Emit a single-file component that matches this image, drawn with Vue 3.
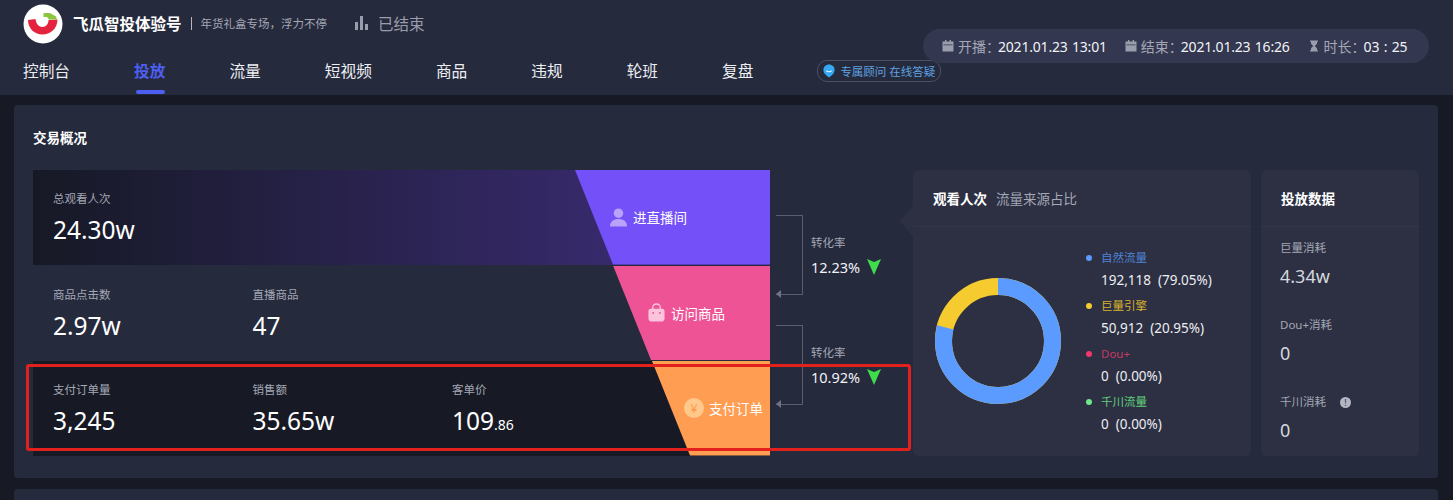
<template>
  <div class="page">
    <header class="top">
      <div class="brand-row">
        <svg class="logo" viewBox="0 0 40 40">
          <circle cx="20" cy="20" r="19.500" fill="#fff" />
          <path d="M5 16L12.500 15C13 20 16 23 19.500 23C23 23 25.500 20 25.500 16L34.500 15.500C34.500 25 27 30.500 19.500 30.500C12 30.500 5 25 5 16Z" fill="#e4243f" />
          <path d="M20.500 9H27L33 12.500L34 15.500L26 15.500L24 13H20.500Z" fill="#8cc63f" />
        </svg>
        <b class="brand-name">飞瓜智投体验号</b>
        <i class="brand-sep"></i>
        <span class="brand-desc">年货礼盒专场，浮力不停</span>
        <svg class="bars" viewBox="0 0 14 14">
          <rect x="0" y="6" width="3" height="8" />
          <rect x="5" y="0" width="3" height="14" />
          <rect x="10" y="8" width="3" height="6" />
        </svg>
        <span class="status">已结束</span>
      </div>
      <div class="time-pill">
        <span class="time-item" v-for="t in times" :key="t.label">
          <svg v-if="t.icon === 'cal'" class="time-icon" viewBox="0 0 12 12">
            <path d="M3 0h1.400v1.500h3.200V0H9v1.500h2.500V11.500H0.500V1.500H3zM1.500 4.400v0.800h9v-0.800z" />
          </svg>
          <svg v-else class="time-icon" viewBox="0 0 12 12">
            <path d="M2 0.500h8v1.200H9v2L6.800 6 9 8.300v2h1v1.200H2v-1.200h1v-2L5.200 6 3 3.700v-2H2z" />
          </svg>
          <span class="time-label">{{ t.label }}：</span><span class="time-val">{{ t.value }}</span>
        </span>
      </div>
      <nav class="nav">
        <a v-for="n in navs" :key="n" class="nav-item" :class="{ active: n === '投放' }">{{ n }}</a>
        <span class="advisor">
          <svg class="advisor-icon" viewBox="0 0 14 16">
            <path d="M7 0.500C3.300 0.500 0.500 3.200 0.500 6.800C0.500 10.800 4 13.500 7 15.500C10 13.500 13.500 10.800 13.500 6.800C13.500 3.200 10.700 0.500 7 0.500Z" fill="#37a8f5" />
            <path d="M4 7.500C4.800 9.500 9.200 9.500 10 7.500" fill="none" stroke="#fff" stroke-width="1.200" />
          </svg>
          专属顾问 在线答疑
        </span>
      </nav>
    </header>

    <section class="card">
      <h3 class="card-title">交易概况</h3>
      <div class="card-body">
        <div class="funnel">
          <div v-for="row in funnel" :key="row.name" class="f-row" :class="row.cls">
            <div class="stats">
              <div v-for="s in row.stats" :key="s.label" class="stat">
                <p class="stat-label">{{ s.label }}</p>
                <p class="stat-val">{{ s.value }}<small v-if="s.small">{{ s.small }}</small></p>
              </div>
            </div>
            <div class="piece">
              <svg v-if="row.cls === 'r1'" class="piece-icon" viewBox="0 0 20 20">
                <circle cx="10" cy="5.500" r="5" fill="#b9a2fb" />
                <path d="M1 19.500C1 14 5 11.500 10 11.500C15 11.500 19 14 19 19.500Z" fill="#b9a2fb" />
              </svg>
              <svg v-else-if="row.cls === 'r2'" class="piece-icon" viewBox="0 0 20 20">
                <path d="M6 7V5a4 4 0 0 1 8 0v2" fill="none" stroke="#fcc3dc" stroke-width="1.500" />
                <path d="M4 6h12c2 0 2.500 1.500 2.500 3v7c0 2.500-1.500 3.500-3.500 3.500H5C3 19.500 1.500 18.500 1.500 16V9C1.500 7.500 2 6 4 6Z" fill="#fcc3dc" />
                <circle cx="6.500" cy="10.500" r="1" fill="#ee5396" />
                <circle cx="13.500" cy="10.500" r="1" fill="#ee5396" />
              </svg>
              <span v-else class="yen">¥</span>
              <span>{{ row.name }}</span>
            </div>
          </div>
        </div>

        <div class="convs">
          <div v-for="c in convs" :key="c" class="conv">
            <div class="bracket"></div>
            <div class="conv-text">
              <p class="conv-label">转化率</p>
              <p class="conv-val">{{ c }}
                <svg class="down" viewBox="0 0 14 16"><path d="M0 0L7 3L14 0L7 16Z" fill="#3fdc4c" /></svg>
              </p>
            </div>
          </div>
        </div>

        <div class="panel source">
          <div class="panel-head"><b>观看人次</b><span>流量来源占比</span></div>
          <div class="source-body">
            <svg class="donut" viewBox="0 0 126 126">
              <circle cx="63" cy="63" r="54.500" fill="none" stroke="#f5cb30" stroke-width="17" />
              <circle cx="63" cy="63" r="54.500" fill="none" stroke="#5b9bff" stroke-width="17" pathLength="100" stroke-dasharray="79.050 100" transform="rotate(-90 63 63)" />
            </svg>
            <ul class="legend">
              <li v-for="l in legend" :key="l.name">
                <p class="legend-name" :style="{ color: l.text }"><i :style="{ background: l.dot }"></i>{{ l.name }}</p>
                <p class="legend-val">{{ l.value }}</p>
              </li>
            </ul>
          </div>
        </div>

        <div class="panel spend">
          <div class="panel-head"><b>投放数据</b></div>
          <div class="spend-body">
            <div v-for="s in spend" :key="s.label" class="spend-item">
              <p class="spend-label">{{ s.label }}<i v-if="s.tip" class="tip">!</i></p>
              <p class="spend-val">{{ s.value }}</p>
            </div>
          </div>
        </div>
      </div>
      <div class="mark"></div>
    </section>
    <section class="card-next"></section>
  </div>
</template>

<script setup>
const navs = ['控制台', '投放', '流量', '短视频', '商品', '违规', '轮班', '复盘']

const times = [
  { icon: 'cal', label: '开播', value: '2021.01.23 13:01' },
  { icon: 'cal', label: '结束', value: '2021.01.23 16:26' },
  { icon: 'glass', label: '时长', value: '03 : 25' }
]

const funnel = [
  { cls: 'r1', name: '进直播间', stats: [{ label: '总观看人次', value: '24.30w' }] },
  {
    cls: 'r2',
    name: '访问商品',
    stats: [
      { label: '商品点击数', value: '2.97w' },
      { label: '直播商品', value: '47' }
    ]
  },
  {
    cls: 'r3',
    name: '支付订单',
    stats: [
      { label: '支付订单量', value: '3,245' },
      { label: '销售额', value: '35.65w' },
      { label: '客单价', value: '109', small: '.86' }
    ]
  }
]

const convs = ['12.23%', '10.92%']

const legend = [
  { name: '自然流量', value: '192,118  (79.05%)', dot: '#5b9bff', text: '#4f83d6' },
  { name: '巨量引擎', value: '50,912  (20.95%)', dot: '#f5cb30', text: '#d9b32e' },
  { name: 'Dou+', value: '0  (0.00%)', dot: '#f0386b', text: '#c23a66' },
  { name: '千川流量', value: '0  (0.00%)', dot: '#6fe88a', text: '#62d07c' }
]

const spend = [
  { label: '巨量消耗', value: '4.34w' },
  { label: 'Dou+消耗', value: '0' },
  { label: '千川消耗', value: '0', tip: true }
]
</script>

<style>
body {
  background: #171a25;
}
</style>

<style scoped>
.page {
  width: 1453px;
  height: 500px;
  overflow: hidden;
  background: #171a25;
  font-family: "Noto Sans", "Noto Sans CJK SC", sans-serif;
  color: #fff;
}

p,
h3,
ul {
  margin: 0;
  padding: 0;
}

.top {
  position: relative;
  height: 95px;
  background: #262a3d;
}

.brand-row {
  display: flex;
  align-items: center;
  height: 46px;
  padding-left: 23px;
}

.logo {
  width: 40px;
  height: 40px;
  margin-top: 1px;
}

.brand-name {
  margin-left: 10px;
  font-size: 15.500px;
  font-weight: 700;
}

.brand-sep {
  width: 1px;
  height: 13px;
  margin: 0 9px 0 9px;
  background: #b5b8c4;
}

.brand-desc {
  font-size: 11.500px;
  color: #a4a7b4;
}

.bars {
  width: 14px;
  height: 14px;
  margin-left: 28px;
  fill: #9a9dab;
}

.status {
  margin-left: 9px;
  font-size: 15.500px;
  color: #9a9dab;
}

.time-pill {
  position: absolute;
  top: 29px;
  left: 923px;
  display: flex;
  align-items: center;
  gap: 18px;
  width: 506px;
  height: 34px;
  box-sizing: border-box;
  padding-left: 19px;
  border-radius: 17px;
  background: #333750;
  font-size: 14px;
  white-space: nowrap;
}

.time-item {
  display: flex;
  align-items: center;
}

.time-icon {
  width: 12px;
  height: 12px;
  margin-right: 4px;
  fill: #9a9dab;
}

.time-label {
  color: #a4a7b4;
}

.time-val {
  margin-left: -2px;
  letter-spacing: -0.200px;
  word-spacing: 1px;
  color: #f2f3f6;
}

.nav {
  display: flex;
  align-items: center;
  gap: 64px;
  padding-left: 23px;
}

.nav-item {
  position: relative;
  display: block;
  height: 49px;
  line-height: 50px;
  font-size: 15.700px;
  color: #eceef2;
}

.nav-item.active {
  color: #4d5ff0;
  font-weight: 700;
}

.nav-item.active::after {
  content: "";
  position: absolute;
  left: 2px;
  bottom: 1px;
  width: 29px;
  height: 4px;
  border-radius: 2px;
  background: #4d5ff0;
}

.advisor {
  display: flex;
  align-items: center;
  gap: 5px;
  height: 20px;
  padding: 0 5px;
  border: 1px solid #4a5066;
  border-radius: 10px;
  font-size: 11.500px;
  color: #5fa3e0;
  white-space: nowrap;
}

.advisor-icon {
  width: 12px;
  height: 14px;
}

.card {
  position: relative;
  height: 373px;
  margin: 10px 15px 0 14px;
  border-radius: 4px;
  background: #262a3d;
}

.card-title {
  height: 65px;
  padding-left: 19px;
  line-height: 67px;
  font-size: 13.500px;
  font-weight: 700;
}

.card-body {
  display: flex;
  padding-left: 19px;
}

.funnel {
  display: flex;
  flex-direction: column;
  gap: 1px;
  width: 737px;
}

.f-row {
  display: flex;
  justify-content: space-between;
  height: 94.500px;
}

.r1 {
  background: linear-gradient(90deg, #161925 0%, #3a2b72 85%);
}

.r3 {
  background: #171a25;
}

.stats {
  display: flex;
  padding: 21px 0 0 20px;
}

.stat {
  width: 199.500px;
}

.stat-label {
  font-size: 11.500px;
  line-height: 15px;
  color: #a4a7b4;
}

.stat-val {
  margin-top: 7px;
  font-size: 24.500px;
  line-height: 34px;
  color: #fff;
}

.stat-val small {
  font-size: 14px;
}

.piece {
  display: flex;
  align-items: center;
  justify-content: flex-end;
  gap: 5px;
  font-size: 13.500px;
  color: #fff;
}

.r1 .piece {
  width: 195px;
  padding-right: 83px;
  box-sizing: border-box;
  background: #7350f7;
  clip-path: polygon(0 0, 100% 0, 100% 100%, 38px 100%);
}

.r2 .piece {
  width: 157px;
  padding-right: 45px;
  box-sizing: border-box;
  background: #ee5396;
  clip-path: polygon(0 0, 100% 0, 100% 100%, 38px 100%);
}

.r3 .piece {
  width: 118px;
  padding-right: 7px;
  box-sizing: border-box;
  background: #ff9d52;
  clip-path: polygon(0 0, 100% 0, 100% 100%, 38px 100%);
}

.piece-icon {
  width: 19px;
  height: 19px;
}

.yen {
  width: 20px;
  height: 20px;
  border-radius: 50%;
  background: #ffc98c;
  text-align: center;
  line-height: 20px;
  font-size: 13px;
  color: #ff9d52;
}

.convs {
  display: flex;
  flex-direction: column;
  gap: 30px;
  width: 143px;
  box-sizing: border-box;
  padding: 45px 0 0 6px;
}

.conv {
  display: flex;
  height: 80px;
}

.bracket {
  position: relative;
  width: 27px;
  height: 80px;
  box-sizing: border-box;
  border: 1px solid #5a5e70;
  border-left: 0;
}

.bracket::after {
  content: "";
  position: absolute;
  left: 0;
  bottom: -4px;
  border: 4px solid transparent;
  border-left: 0;
  border-right: 5px solid #6f7385;
}

.conv-text {
  padding: 20px 0 0 8px;
}

.conv-label {
  font-size: 11.500px;
  line-height: 15px;
  color: #a4a7b4;
}

.conv-val {
  display: flex;
  align-items: center;
  gap: 7px;
  margin-top: 7px;
  font-size: 14.500px;
  line-height: 20px;
  color: #f2f3f6;
}

.down {
  width: 14px;
  height: 16px;
}

.panel {
  height: 286px;
  border-radius: 6px;
  background: #2c3042;
}

.panel-head {
  display: flex;
  align-items: center;
  gap: 9px;
  height: 56px;
  padding-left: 20px;
  border-bottom: 1px solid #323649;
  font-size: 13.500px;
}

.panel-head span {
  color: #a4a7b4;
}

.source {
  position: relative;
  width: 338px;
}

.source::before {
  content: "";
  position: absolute;
  left: -13px;
  top: 35px;
  border: 16px solid transparent;
  border-left: 0;
  border-right: 13px solid #2c3042;
}

.source-body {
  display: flex;
  align-items: center;
  height: 227px;
  padding-left: 22px;
}

.donut {
  width: 126px;
  height: 126px;
}

.legend {
  margin: 9px 0 0 25px;
  list-style: none;
}

.legend li {
  height: 48px;
}

.legend-name {
  display: flex;
  align-items: center;
  font-size: 11.500px;
  line-height: 18px;
}

.legend-name i {
  width: 6px;
  height: 6px;
  margin-right: 9px;
  border-radius: 50%;
}

.legend-val {
  margin-top: 4px;
  padding-left: 15px;
  font-size: 13.500px;
  line-height: 18px;
  white-space: pre;
  color: #eceef2;
}

.spend {
  width: 158px;
  margin-left: 10px;
}

.spend-body {
  padding: 12px 0 0 19px;
}

.spend-item {
  height: 77px;
}

.spend-label {
  display: flex;
  align-items: center;
  font-size: 11.500px;
  line-height: 18px;
  color: #a4a7b4;
}

.spend-val {
  margin-top: 6px;
  font-size: 18px;
  line-height: 27px;
  color: #d5d7de;
}

.tip {
  width: 11px;
  height: 11px;
  margin-left: 14px;
  border-radius: 50%;
  background: #b4b6c2;
  text-align: center;
  line-height: 11px;
  font-size: 9px;
  font-style: normal;
  color: #2c3042;
}

/* red annotation drawn over the third row */
.mark {
  position: absolute;
  left: 12px;
  top: 259px;
  width: 885px;
  height: 87px;
  box-sizing: border-box;
  border: 3px solid #e3211c;
  border-radius: 3px;
}

.card-next {
  height: 40px;
  margin: 11px 15px 0 14px;
  border-radius: 4px;
  background: #262a3d;
}
</style>
